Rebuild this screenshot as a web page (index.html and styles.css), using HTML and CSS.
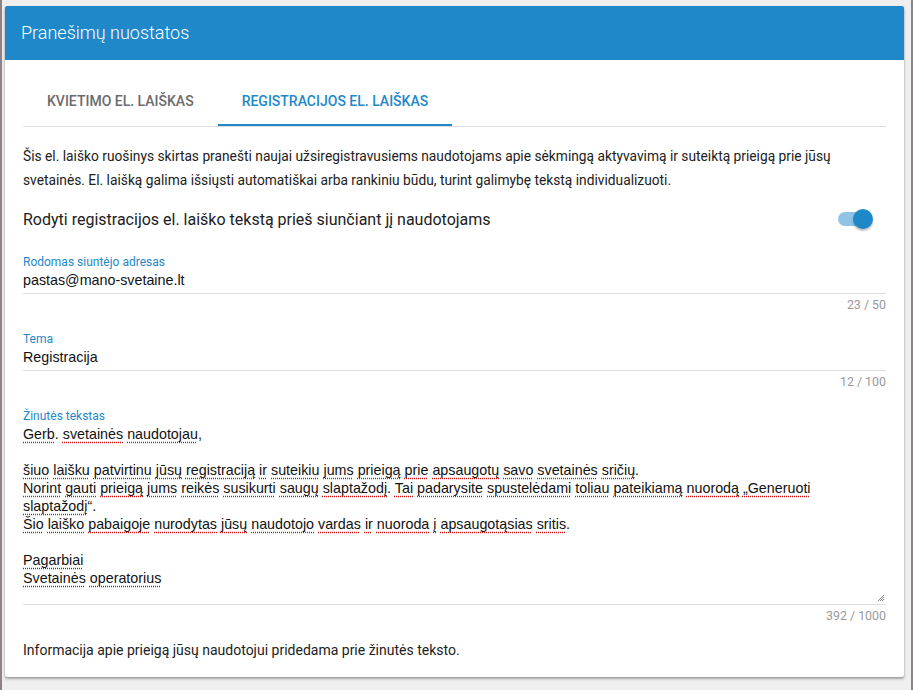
FILE: index.html
```html
<!DOCTYPE html>
<html lang="lt">
    <head>
        <meta charset="UTF-8">
        <meta name="viewport" content="width=device-width, initial-scale=1.0">
        <title>Pranešimų nuostatos</title>
        <link rel="stylesheet" href="styles.css">
    </head>
    <body>
        <div class="frame">
            <div class="card">
                <div class="card-title">Pranešimų nuostatos</div>

                <div class="card-body">
                    <div class="tabs">
                        <div class="tab">Kvietimo el. laiškas</div>
                        <div class="tab active">Registracijos el. laiškas</div>
                    </div>

                    <p class="intro">Šis el. laiško ruošinys skirtas pranešti naujai užsiregistravusiems naudotojams apie sėkmingą aktyvavimą ir suteiktą prieigą prie jūsų svetainės. El. laišką galima išsiųsti automatiškai arba rankiniu būdu, turint galimybę tekstą individualizuoti.</p>

                    <div class="switch-row">
                        <span>Rodyti registracijos el. laiško tekstą prieš siunčiant jį naudotojams</span>
                        <div class="switch on"><div class="thumb"></div></div>
                    </div>

                    <div class="field first">
                        <label>Rodomas siuntėjo adresas</label>
                        <div class="value">pastas@mano-svetaine.lt</div>
                        <div class="counter">23 / 50</div>
                    </div>

                    <div class="field">
                        <label>Tema</label>
                        <div class="value">Registracija</div>
                        <div class="counter">12 / 100</div>
                    </div>

                    <div class="field">
                        <label>Žinutės tekstas</label>
                        <div class="value textarea"><span class="typo">Gerb</span>. <span class="typo">svetainės</span> <span class="typo">naudotojau</span>,

<span class="typo">šiuo</span> <span class="typo">laišku</span> <span class="typo">patvirtinu</span> <span class="typo">jūsų</span> <span class="typo">registraciją</span> <span class="typo">ir</span> <span class="typo">suteikiu</span> <span class="typo">jums</span> <span class="typo">prieigą</span> <span class="typo">prie</span> <span class="typo">apsaugotų</span> <span class="typo">savo</span> <span class="typo">svetainės</span> <span class="typo">sričių</span>.
<span class="typo">Norint</span> <span class="typo">gauti</span> <span class="typo">prieigą</span> <span class="typo">jums</span> <span class="typo">reikės</span> <span class="typo">susikurti</span> <span class="typo">saugų</span> <span class="typo">slaptažodį</span>. <span class="typo">Tai</span> <span class="typo">padarysite</span> <span class="typo">spustelėdami</span> <span class="typo">toliau</span> <span class="typo">pateikiamą</span> <span class="typo">nuorodą</span> <span class="typo">„Generuoti</span> <span class="typo">slaptažodį</span>“.
<span class="typo">Šio</span> <span class="typo">laiško</span> <span class="typo">pabaigoje</span> <span class="typo">nurodytas</span> <span class="typo">jūsų</span> <span class="typo">naudotojo</span> <span class="typo">vardas</span> <span class="typo">ir</span> <span class="typo">nuoroda</span> <span class="typo">į</span> <span class="typo">apsaugotąsias</span> <span class="typo">sritis</span>.

<span class="typo dark">Pagarbiai</span>
<span class="typo dark">Svetainės</span> <span class="typo dark">operatorius</span><svg class="grip" width="8" height="8" viewBox="0 0 8 8"><path d="M7 1L1 7M7 3L3 7M7 5L5 7" stroke="#888" stroke-width="1"/></svg></div>
                        <div class="counter">392 / 1000</div>
                    </div>

                    <p class="note">Informacija apie prieigą jūsų naudotojui pridedama prie žinutės teksto.</p>
                </div>
            </div>
        </div>
    </body>
</html>
```

FILE: styles.css
```css
* {
    margin: 0;
    padding: 0;
    box-sizing: border-box;
}
html, body {
    height: 100%;
}
body {
    font-family: Roboto, "Noto Sans", sans-serif;
    color: #212121;
    background-color: #8c8287;
}
.frame {
    height: 100%;
    margin: 0 2px 2px 2px;
    padding: 6px 3px;
    background-color: #efefef;
}
.card {
    width: 899px;
    height: 671px;
    background-color: #fff;
    box-shadow: 0 2px 3px rgba(0, 0, 0, 0.25), 0 1px 2px rgba(0, 0, 0, 0.2);
    border-radius: 2px;
    overflow: hidden;
}
.card-title {
    height: 54px;
    line-height: 54px;
    padding-left: 16px;
    background-color: #1e88c9;
    color: #fff;
    font-size: 18px;
    font-weight: 300;
}
.card-body {
    padding: 18px 18px 0 18px;
}
.tabs {
    display: flex;
    height: 49px;
    border-bottom: 1px solid #dcdcdc;
}
.tab {
    padding: 0 24px;
    line-height: 47px;
    font-size: 14px;
    font-weight: 500;
    text-transform: uppercase;
    color: #6b6b6b;
    border-bottom: 2px solid transparent;
}
.tab.active {
    color: #1e88c9;
    border-bottom-color: #1e88c9;
}
.intro {
    margin-top: 17px;
    font-size: 13.78px;
    line-height: 24px;
}
.switch-row {
    display: flex;
    align-items: center;
    justify-content: space-between;
    height: 32px;
    margin-top: 11px;
    font-size: 16px;
}
.switch {
    position: relative;
    width: 31px;
    height: 14px;
    margin-right: 17px;
    border-radius: 7px;
    background-color: #8ec4e6;
}
.switch .thumb {
    position: absolute;
    top: -3px;
    right: -4px;
    width: 20px;
    height: 20px;
    border-radius: 50%;
    background-color: #1e88c9;
    box-shadow: 0 2px 2px rgba(0, 0, 0, 0.25);
}
.field {
    margin-top: 20px;
}
.field label {
    display: block;
    font-size: 12px;
    line-height: 14px;
    color: #1e88c9;
}
.field .value {
    position: relative;
    margin-top: 1px;
    padding-bottom: 3px;
    font-family: "Liberation Sans", Arial, sans-serif;
    font-size: 14.3px;
    line-height: 20px;
    color: #111;
    border-bottom: 1px solid #dcdcdc;
}
.field .textarea {
    margin-top: 2px;
    height: 180px;
    padding-right: 24px;
    line-height: 18px;
    white-space: pre-wrap;
}
.typo {
    text-decoration: underline dotted #d01010;
    text-underline-offset: 3px;
}
.typo.dark {
    text-decoration-color: #444;
}
.grip {
    position: absolute;
    right: 1px;
    bottom: 2px;
}
.counter {
    margin-top: 4px;
    text-align: right;
    font-size: 12.4px;
    line-height: 14px;
    color: #9a9a9a;
}
.note {
    margin-top: 17px;
    font-size: 14px;
    line-height: 20px;
}
```
